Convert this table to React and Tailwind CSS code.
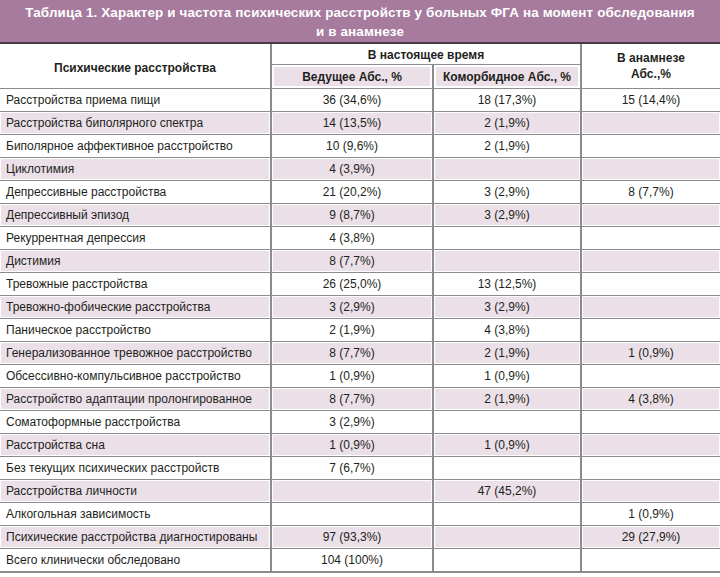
const rows = [
  ["Расстройства приема пищи", "36 (34,6%)", "18 (17,3%)", "15 (14,4%)"],
  ["Расстройства биполярного спектра", "14 (13,5%)", "2 (1,9%)", ""],
  ["Биполярное аффективное расстройство", "10 (9,6%)", "2 (1,9%)", ""],
  ["Циклотимия", "4 (3,9%)", "", ""],
  ["Депрессивные расстройства", "21 (20,2%)", "3 (2,9%)", "8 (7,7%)"],
  ["Депрессивный эпизод", "9 (8,7%)", "3 (2,9%)", ""],
  ["Рекуррентная депрессия", "4 (3,8%)", "", ""],
  ["Дистимия", "8 (7,7%)", "", ""],
  ["Тревожные расстройства", "26 (25,0%)", "13 (12,5%)", ""],
  ["Тревожно-фобические расстройства", "3 (2,9%)", "3 (2,9%)", ""],
  ["Паническое расстройство", "2 (1,9%)", "4 (3,8%)", ""],
  ["Генерализованное тревожное расстройство", "8 (7,7%)", "2 (1,9%)", "1 (0,9%)"],
  ["Обсессивно-компульсивное расстройство", "1 (0,9%)", "1 (0,9%)", ""],
  ["Расстройство адаптации пролонгированное", "8 (7,7%)", "2 (1,9%)", "4 (3,8%)"],
  ["Соматоформные расстройства", "3 (2,9%)", "", ""],
  ["Расстройства сна", "1 (0,9%)", "1 (0,9%)", ""],
  ["Без текущих психических расстройств", "7 (6,7%)", "", ""],
  ["Расстройства личности", "", "47 (45,2%)", ""],
  ["Алкогольная зависимость", "", "", "1 (0,9%)"],
  ["Психические расстройства диагностированы", "97 (93,3%)", "", "29 (27,9%)"],
  ["Всего клинически обследовано", "104 (100%)", "", ""],
];

const App = () => {
  return (
    <div className="w-[720px] h-[577px] bg-white text-[#231f20] font-['Liberation_Sans',Arial,sans-serif] overflow-hidden">
      <div className="h-[44px] bg-[#a67b9e] border-b-2 border-[#4a3a46] pt-[3px] text-center text-white font-bold text-[13.4px] leading-[19px] tracking-[0.15px] whitespace-nowrap">
        <div>Таблица 1. Характер и частота психических расстройств у больных ФГА на момент обследования</div>
        <div>и в анамнезе</div>
      </div>
      <table className="w-[720px] border-collapse table-fixed text-[12px]">
        <colgroup>
          <col className="w-[271px]" />
          <col className="w-[162px]" />
          <col className="w-[148px]" />
          <col className="w-[139px]" />
        </colgroup>
        <thead>
          <tr className="h-[20px]">
            <th rowSpan={2} className="font-bold text-center align-middle border-b border-[#8c8c8c] pt-1">
              Психические расстройства
            </th>
            <th colSpan={2} className="font-bold text-center border-l-2 border-b border-[#8c8c8c] pt-[2px]">
              В настоящее время
            </th>
            <th rowSpan={2} className="font-bold text-center leading-[16px] border-l-2 border-b border-[#8c8c8c]">
              В анамнезе
              <br />
              Абс.,%
            </th>
          </tr>
          <tr className="h-[24px]">
            <th className="font-bold text-center bg-[#ebdfe8] shadow-[inset_0_0_0_2px_white] border-l-2 border-b border-[#8c8c8c]">
              Ведущее Абс., %
            </th>
            <th className="font-bold text-center bg-[#ebdfe8] shadow-[inset_0_0_0_2px_white] border-l-2 border-b border-[#8c8c8c]">
              Коморбидное Абс., %
            </th>
          </tr>
        </thead>
        <tbody>
          {rows.map((r, i) => {
            const pink = i % 2 === 1;
            const last = i === rows.length - 1;
            const cell = `${pink ? "bg-[#ebdfe8] shadow-[inset_0_0_0_1px_white]" : ""} ${last ? "border-b-2" : "border-b"} border-[#8c8c8c]`;
            return (
              <tr key={i} className="h-[23px]">
                <td className={`${cell} text-left pl-[6px]`}>{r[0]}</td>
                <td className={`${cell} border-l-2 text-center`}>{r[1]}</td>
                <td className={`${cell} border-l-2 text-center`}>{r[2]}</td>
                <td className={`${cell} border-l-2 text-center`}>{r[3]}</td>
              </tr>
            );
          })}
        </tbody>
      </table>
    </div>
  );
};

export default App;
